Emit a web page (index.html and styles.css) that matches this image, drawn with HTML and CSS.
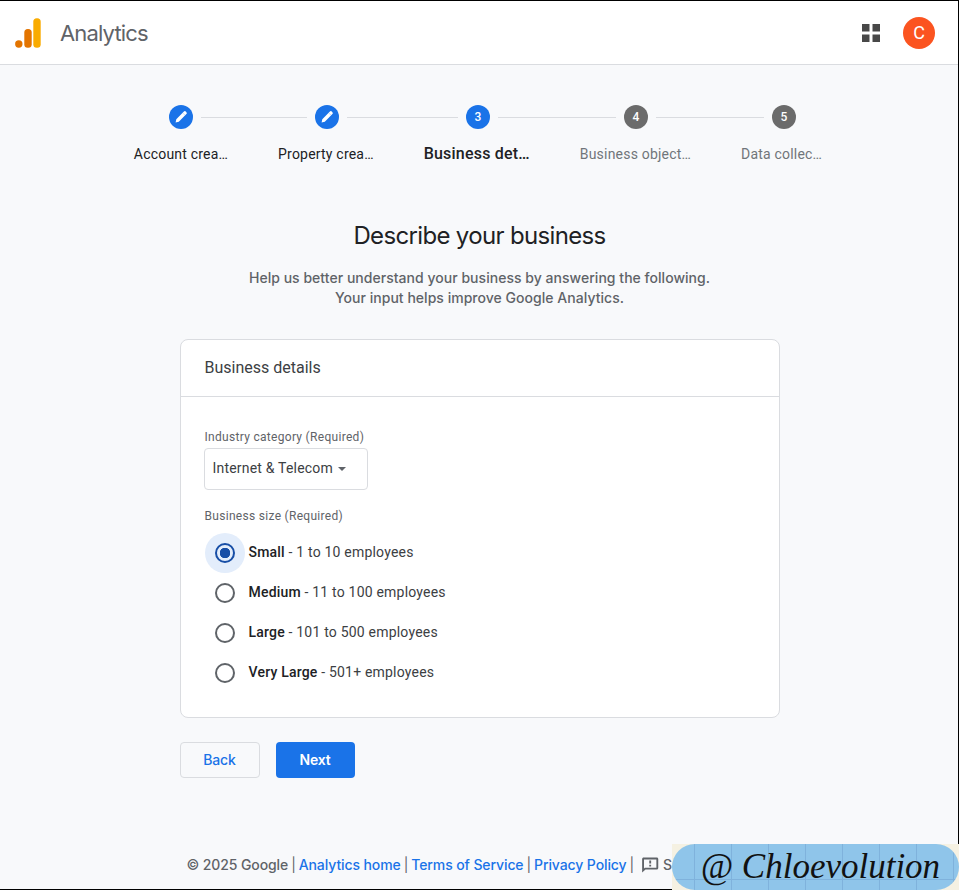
FILE: index.html
```html
<!DOCTYPE html>
<html lang="en">
<head>
<meta charset="utf-8">
<title>Analytics</title>
<link rel="stylesheet" href="styles.css">
</head>
<body>
<div class="frame">
  <header class="topbar">
    <div class="brand">
      <svg class="logo" width="27" height="30" viewBox="0 0 27 30">
        <rect x="18.3" y="0.3" width="7.4" height="29.4" rx="3.5" fill="#f9ab00"/>
        <rect x="9.3" y="11" width="7.4" height="18.7" rx="3.5" fill="#e37400"/>
        <circle cx="3.8" cy="26" r="3.7" fill="#e37400"/>
      </svg>
      <span class="brand-name">Analytics</span>
    </div>
    <div class="top-actions">
      <svg class="apps" width="18" height="18" viewBox="0 0 18 18" fill="#484848">
        <rect x="0" y="0" width="7.5" height="7.5"/><rect x="10.5" y="0" width="7.5" height="7.5"/>
        <rect x="0" y="10.5" width="7.5" height="7.5"/><rect x="10.5" y="10.5" width="7.5" height="7.5"/>
      </svg>
      <div class="avatar">C</div>
    </div>
  </header>

  <main class="content">
    <div class="stepper">
      <div class="step-track">
        <span class="dot dot-blue"><svg width="16" height="16" viewBox="0 0 16 16"><path d="M2.6 13.4l.7-3.2 7.6-7.6a1.3 1.3 0 0 1 1.9 0l.6.6a1.3 1.3 0 0 1 0 1.9l-7.6 7.6z" fill="#fff"/><path d="M10 4.2l1.8 1.8" stroke="#a9cbf7" stroke-width=".7"/></svg></span>
        <span class="line line-1"></span>
        <span class="dot dot-blue"><svg width="16" height="16" viewBox="0 0 16 16"><path d="M2.6 13.4l.7-3.2 7.6-7.6a1.3 1.3 0 0 1 1.9 0l.6.6a1.3 1.3 0 0 1 0 1.9l-7.6 7.6z" fill="#fff"/><path d="M10 4.2l1.8 1.8" stroke="#a9cbf7" stroke-width=".7"/></svg></span>
        <span class="line line-2"></span>
        <span class="dot dot-blue">3</span>
        <span class="line line-3"></span>
        <span class="dot dot-gray">4</span>
        <span class="line line-4"></span>
        <span class="dot dot-gray">5</span>
      </div>
      <div class="step-labels">
        <span class="step-label">Account crea…</span>
        <span class="step-label">Property crea…</span>
        <span class="step-label step-current">Business det…</span>
        <span class="step-label step-todo">Business object…</span>
        <span class="step-label step-todo">Data collec…</span>
      </div>
    </div>

    <h1 class="title">Describe your business</h1>
    <p class="subtitle">Help us better understand your business by answering the following.<br>Your input helps improve Google Analytics.</p>

    <section class="card">
      <h2 class="card-head">Business details</h2>
      <div class="card-body">
        <div class="field-label">Industry category (Required)</div>
        <div class="select">Internet &amp; Telecom<span class="caret"></span></div>
        <div class="field-label size-label">Business size (Required)</div>
        <div class="radios">
          <div class="radio-row"><span class="radio-halo"><span class="radio radio-on"></span></span><span class="radio-text"><b>Small</b> - 1 to 10 employees</span></div>
          <div class="radio-row"><span class="radio-halo-off"><span class="radio"></span></span><span class="radio-text"><b>Medium</b> - 11 to 100 employees</span></div>
          <div class="radio-row"><span class="radio-halo-off"><span class="radio"></span></span><span class="radio-text"><b>Large</b> - 101 to 500 employees</span></div>
          <div class="radio-row"><span class="radio-halo-off"><span class="radio"></span></span><span class="radio-text"><b>Very Large</b> - 501+ employees</span></div>
        </div>
      </div>
    </section>

    <div class="actions">
      <button class="btn btn-back">Back</button>
      <button class="btn btn-next">Next</button>
    </div>

    <footer class="footer">
      <span>© 2025 Google</span><span class="sep">|</span><a class="link">Analytics home</a><span class="sep">|</span><a class="link">Terms of Service</a><span class="sep">|</span><a class="link">Privacy Policy</a><span class="sep">|</span>
      <svg class="fb" width="18" height="18" viewBox="0 0 24 24" fill="#5f6368"><path d="M21 2H3.500C2.400 2 1.500 2.900 1.500 4v18l4.500-4h15c1.100 0 2-.9 2-2V4c0-1.100-.9-2-2-2zm-.5 13.500H5L4 16.500V4.500h16.500zM11 11.500h2.500V14H11zM11 6h2.500v4H11z"/></svg>
      <span>Send feedback</span>
    </footer>
  </main>

  <div class="watermark"><span class="watermark-pill">@ Chloevolution</span></div>
</div>
</body>
</html>
```

FILE: styles.css
```css
* { box-sizing: border-box; }
html, body { margin: 0; padding: 0; height: 100%; }
body { font-family: Roboto, "Liberation Sans", sans-serif; color: #202124; background: #f8f9fb; overflow: hidden; }

.frame {
  position: relative;
  width: 959px;
  height: 890px;
  border-top: 1px solid #000;
  border-right: 1px solid #000;
  border-bottom: 1px solid #000;
  display: flex;
  flex-direction: column;
}

.topbar {
  height: 64px;
  flex: none;
  background: #fff;
  border-bottom: 1px solid #dadce0;
  display: flex;
  align-items: center;
  justify-content: space-between;
  padding: 0 23px 0 15px;
}
.brand { display: flex; align-items: center; }
.logo { display: block; margin-top: 1px; }
.brand-name { margin-left: 18px; font-family: Inter, sans-serif; font-size: 22px; color: #5f6368; letter-spacing: -0.85px; }
.top-actions { display: flex; align-items: center; gap: 23px; }
.apps { display: block; }
.avatar {
  width: 32px; height: 32px; border-radius: 50%;
  background: #fb5420; color: #fff;
  display: flex; align-items: center; justify-content: center;
  font-size: 18px;
}

.content { flex: 1; display: flex; flex-direction: column; align-items: center; padding-left: 1px; }

.stepper { width: 100%; padding-top: 40px; }
.step-track { display: flex; align-items: center; padding-left: 168px; }
.dot {
  width: 24px; height: 24px; border-radius: 50%; flex: none;
  display: flex; align-items: center; justify-content: center;
  color: #fff; font-size: 12px; font-weight: 500;
}
.dot-blue { background: #1a73e8; }
.dot-gray { background: #6b6b6b; }
.line { height: 1px; background: #dadce0; margin: 0 8px; flex: none; }
.line-1 { width: 106px; }
.line-2 { width: 111px; }
.line-3 { width: 118px; }
.line-4 { width: 108px; }
.step-labels { display: flex; gap: 50px; justify-content: center; margin-top: 15px; padding-right: 3px; font-size: 14px; line-height: 20px; letter-spacing: 0.2px; }
.step-label { white-space: nowrap; }
.step-current { font-size: 16px; font-weight: 500; }
.step-todo { color: #70757a; }

.title { margin: 56px 0 0; font-family: Inter, sans-serif; font-size: 24px; line-height: 32px; font-weight: 400; color: #202124; letter-spacing: -0.66px; }
.subtitle { margin: 16px 0 0; text-align: center; font-family: Inter, sans-serif; font-size: 14px; line-height: 20px; font-weight: 500; color: #5f6368; letter-spacing: 0.03px; }

.card { width: 600px; height: 379px; margin-top: 31px; background: #fff; border: 1px solid #dadce0; border-radius: 8px; flex: none; }
.card-head { margin: 0; height: 57px; padding: 0 24px 2px; display: flex; align-items: center; border-bottom: 1px solid #dadce0; font-size: 16px; font-weight: 400; color: #3c4043; }
.card-body { padding: 32px 24px 0 23px; }
.field-label { font-size: 12px; line-height: 16px; color: #5f6368; letter-spacing: 0.3px; padding-left: 1px; }
.select {
  width: 164px; height: 42px; margin-top: 3px;
  border: 1px solid #dadce0; border-radius: 4px;
  display: flex; align-items: center; padding: 0 0 2px 8px;
  font-size: 14px; color: #3c4043; letter-spacing: 0.2px;
}
.caret { width: 0; height: 0; margin-left: 5px; border-left: 4.5px solid transparent; border-right: 4.5px solid transparent; border-top: 4.5px solid #5f6368; margin-top: 2px; }
.size-label { margin-top: 18px; }
.radios { margin-top: 9px; margin-left: 1px; }
.radio-row { height: 40px; display: flex; align-items: center; }
.radio-halo, .radio-halo-off { width: 40px; height: 40px; border-radius: 50%; display: flex; align-items: center; justify-content: center; flex: none; }
.radio-halo { background: #e3edfb; }
.radio { width: 20px; height: 20px; border-radius: 50%; border: 2px solid #5f6368; display: block; }
.radio-on { border-color: #174ea6; background: radial-gradient(circle, #174ea6 0 5px, transparent 5.5px); }
.radio-text { margin-left: 4px; margin-bottom: 2px; font-size: 14px; color: #3c4043; letter-spacing: 0.2px; }
.radio-text b { font-weight: 500; color: #202124; }

.actions { width: 600px; display: flex; gap: 16px; margin-top: 24px; flex: none; }
.btn { height: 36px; padding: 0 0 2px; border-radius: 4px; font-family: Inter, sans-serif; font-size: 14px; font-weight: 500; letter-spacing: -0.2px; }
.btn-back { width: 80px; background: transparent; border: 1px solid #dadce0; color: #1a73e8; }
.btn-next { width: 79px; background: #1a73e8; border: 0; color: #fff; font-weight: 600; }

.footer { margin-top: 77px; padding-right: 10px; display: flex; align-items: center; font-family: Inter, sans-serif; font-size: 14px; line-height: 20px; color: #5f6368; font-weight: 500; letter-spacing: -0.1px; white-space: nowrap; }
.link { color: #1a73e8; }
.sep { margin: 0 3px; font-weight: 400; }
.fb { margin: 0 4px 0 4px; }

.watermark { position: absolute; left: 672px; top: 843px; width: 287px; height: 46px; background: #f5f1e2; }
.watermark-pill {
  display: flex; align-items: center; justify-content: center;
  width: 100%; height: 100%; border-radius: 23px;
  background-color: #8fc5ea;
  background-image: repeating-linear-gradient(90deg, transparent 0 22px, #7fb2dc 22px 23px, transparent 23px 37px), linear-gradient(180deg, transparent 0 35px, #7fb2dc 35px 36px, transparent 36px);
  font-family: "Liberation Serif", serif; font-style: italic; font-size: 35px; color: #111; padding-left: 10px;
}
```
